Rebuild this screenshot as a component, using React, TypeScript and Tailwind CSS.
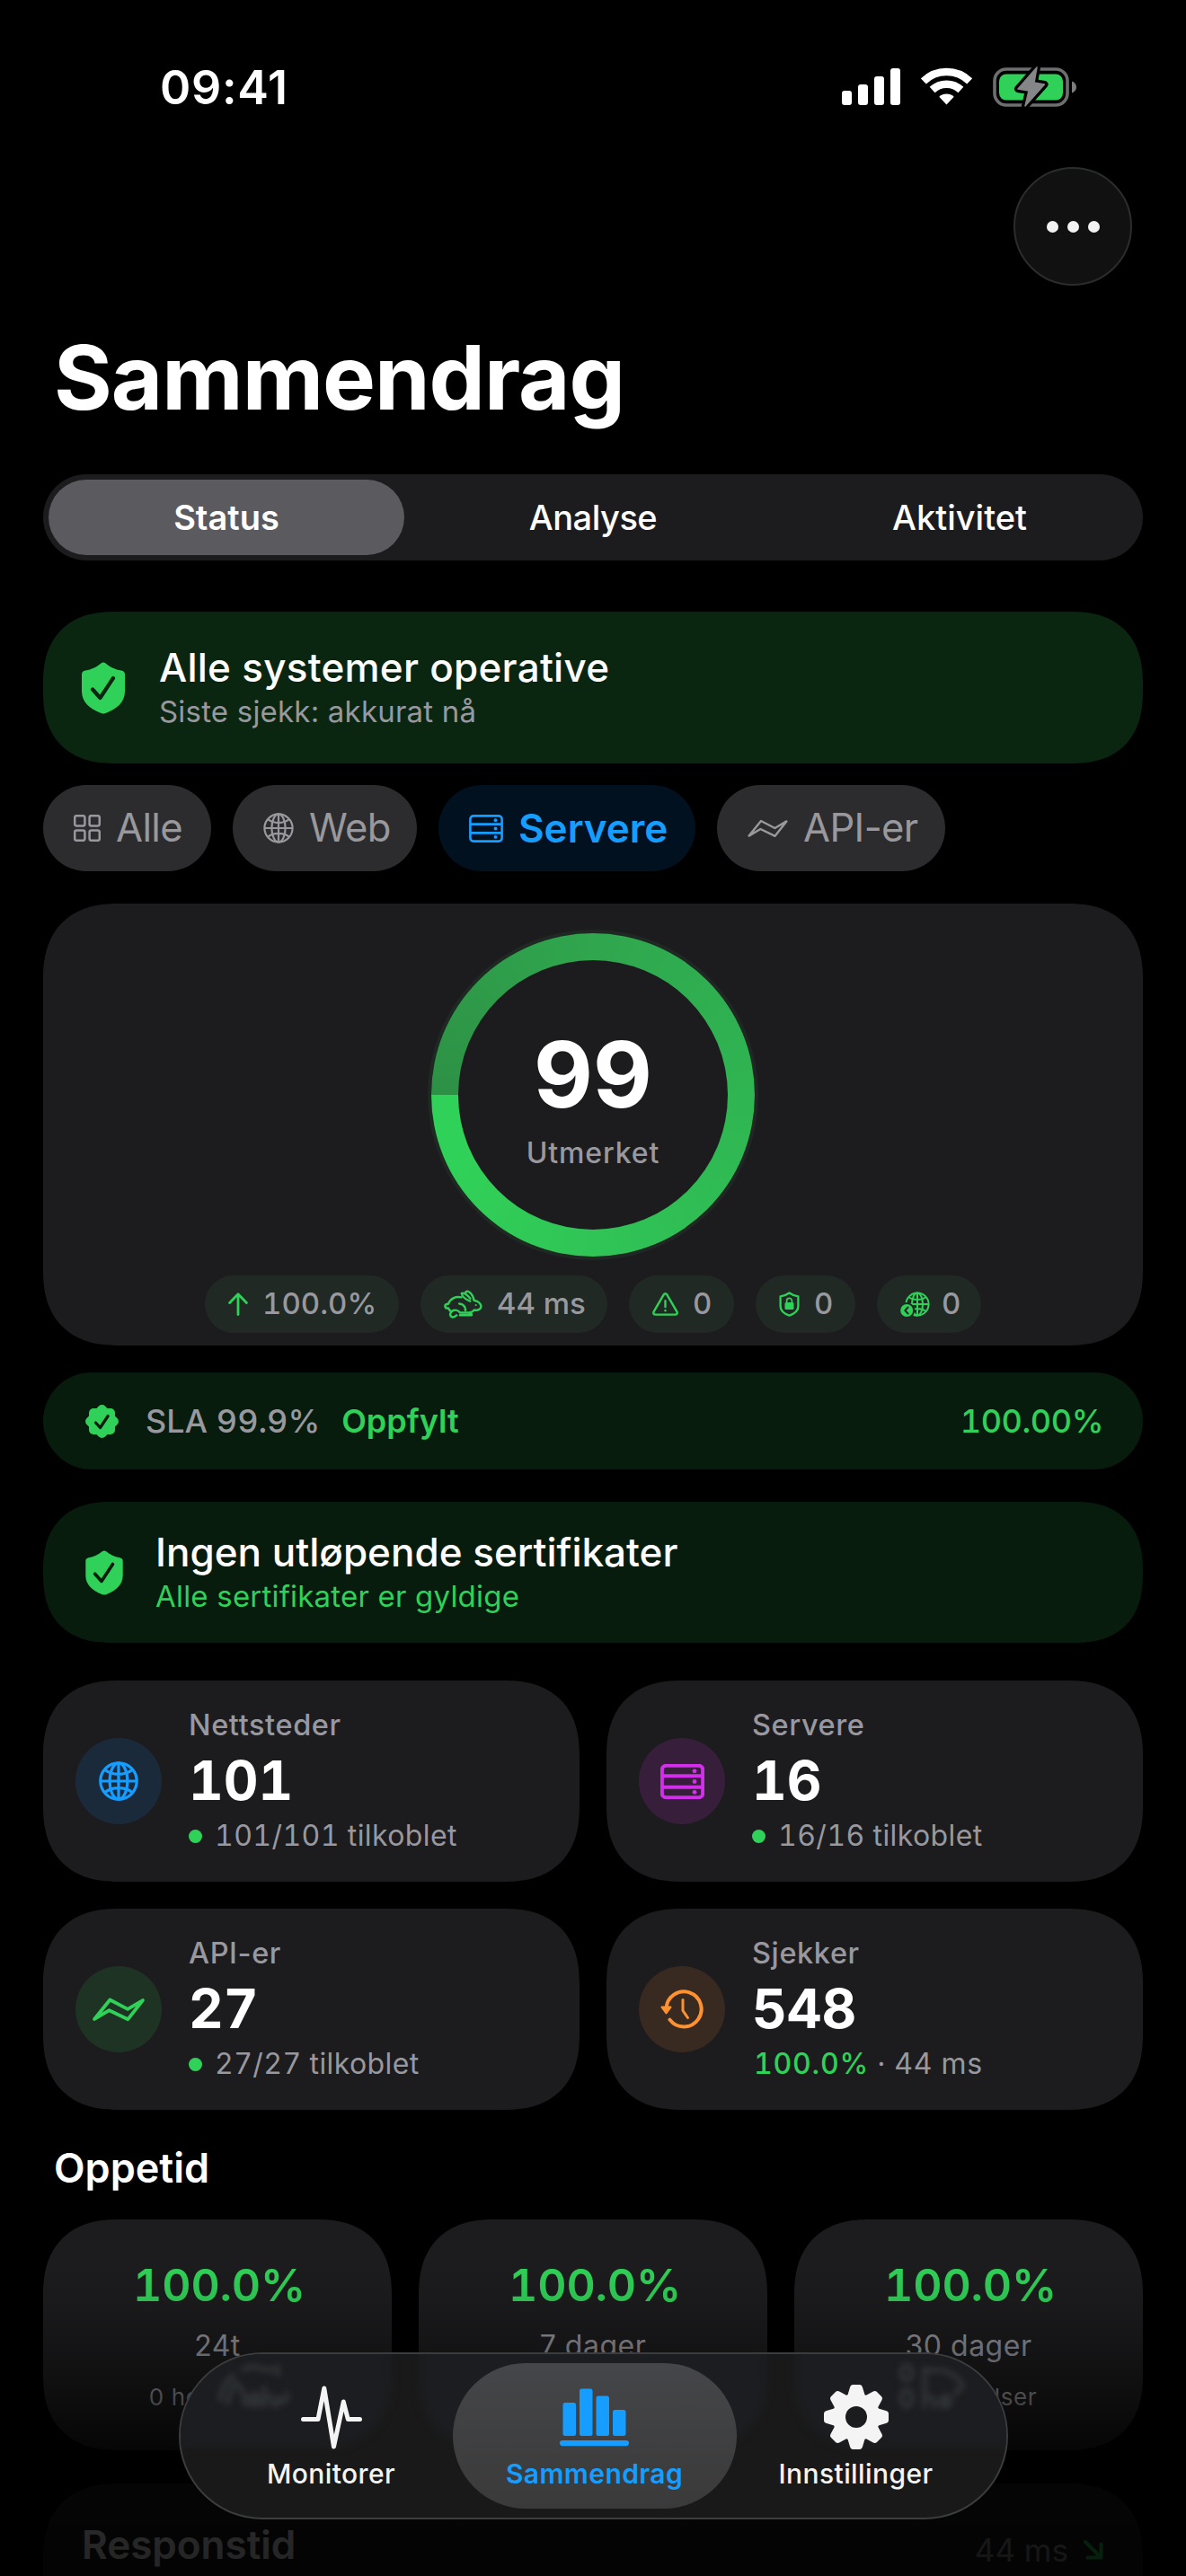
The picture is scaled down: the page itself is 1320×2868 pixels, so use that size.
import type { ReactNode } from "react";
import { cx } from "class-variance-authority";

type IconProps = { className?: string };

function SignalIcon() {
  return (
    <svg className="h-[43px] w-[65px]" viewBox="0 0 65 43" fill="#fff">
      <rect x="0" y="26" width="11" height="16" rx="3" />
      <rect x="18" y="19" width="11" height="23" rx="3" />
      <rect x="36" y="10" width="11" height="32" rx="3" />
      <rect x="54" y="1" width="11" height="41" rx="3" />
    </svg>
  );
}

function WifiIcon() {
  return (
    <svg className="h-[43px] w-[57px]" viewBox="0 0 57 43" fill="none" stroke="#fff">
      <path d="M2.8 15.4a37 37 0 0 1 51.4 0" strokeWidth="8.6" />
      <path d="M12.6 25a23.2 23.2 0 0 1 31.8 0" strokeWidth="8.6" />
      <path d="M20.3 32.8a12 12 0 0 1 16.4 0L28.5 41.6z" fill="#fff" stroke="none" />
    </svg>
  );
}

function BatteryIcon() {
  const bolt = "M49 1 28 25l12 2-4 17 21.5-24L46 18z";
  return (
    <svg className="h-[46px] w-[94px]" viewBox="0 0 94 46">
      <rect x="2" y="3" width="81" height="40" rx="13" fill="none" stroke="#6e6e71" strokeWidth="3.6" />
      <rect x="7" y="8.5" width="71" height="29" rx="8" fill="#30d158" />
      <path d="M88 16.5c3 .8 5 3.4 5 6.5s-2 5.7-5 6.500z" fill="#7d7d80" />
      <path d={bolt} fill="#000" stroke="#000" strokeWidth="8" strokeLinejoin="round" />
      <path d={bolt} fill="#858688" stroke="#858688" strokeWidth="1.5" strokeLinejoin="round" />
    </svg>
  );
}

function GridIcon({ className }: IconProps) {
  return (
    <svg className={className} viewBox="0 0 30 30" fill="none" stroke="currentColor" strokeWidth="2.5">
      <rect x="1.2" y="1.2" width="11.2" height="11.2" rx="2" />
      <rect x="17.6" y="1.2" width="11.2" height="11.2" rx="2" />
      <rect x="1.2" y="17.6" width="11.2" height="11.2" rx="2" />
      <rect x="17.6" y="17.6" width="11.2" height="11.2" rx="2" />
    </svg>
  );
}

function GlobeIcon({ className, stroke = 2.2 }: IconProps & { stroke?: number }) {
  return (
    <svg className={className} viewBox="0 0 34 34" fill="none" stroke="currentColor" strokeWidth={stroke}>
      <circle cx="17" cy="17" r="15.6" />
      <ellipse cx="17" cy="17" rx="7.6" ry="15.6" />
      <path d="M17 1.4v31.2M1.4 17h31.2M5 7.2c3.2 2.5 7.4 3.9 12 3.9s8.800-1.4 12-3.9M5 26.8c3.2-2.5 7.4-3.9 12-3.9s8.800 1.4 12 3.9" />
    </svg>
  );
}

function ServerIcon({ className, stroke = 2.6 }: IconProps & { stroke?: number }) {
  return (
    <svg className={className} viewBox="0 0 38 31" fill="none" stroke="currentColor" strokeWidth={stroke} preserveAspectRatio="none">
      <rect x="1.4" y="1.4" width="35.2" height="28.2" rx="3.6" />
      <path d="M1.4 10.6h35.2M1.4 20.4h35.2" />
      <g fill="currentColor" stroke="none">
        <circle cx="29.5" cy="6.2" r="1.9" />
        <circle cx="29.5" cy="15.5" r="1.9" />
        <circle cx="29.5" cy="24.9" r="1.9" />
      </g>
    </svg>
  );
}

function ApiIcon({ className, stroke = 2.4 }: IconProps & { stroke?: number }) {
  return (
    <svg className={className} viewBox="0 0 45 21" fill="none" stroke="currentColor" strokeWidth={stroke} strokeLinejoin="round">
      <path d="M1.6 18.6 15 2l15.400 8L43.400 2.400 30.600 18.800 14.400 11z" />
    </svg>
  );
}

function ShieldCheck({ className, mark }: IconProps & { mark: string }) {
  return (
    <svg className={className} viewBox="0 0 48 58">
      <path
        d="M24 .5c1 0 1.600.3 2.500 1C32 6 37 8.200 44 9.600c2.700.5 4 1.700 4 4.400v18.500c0 12-8.500 19.500-21.500 24.500-1.900.7-3.100.7-5 0C8.500 52 0 44.500 0 32.500V14c0-2.700 1.300-3.900 4-4.400C11 8.200 16 6 21.500 1.500c.9-.7 1.500-1 2.500-1z"
        fill="#30d158"
      />
      <path d="m12 30.500 8.500 9.500 14.500-22" fill="none" stroke={mark} strokeWidth="4.2" strokeLinecap="round" strokeLinejoin="round" />
    </svg>
  );
}

function SealCheck({ className }: IconProps) {
  return (
    <svg className={className} viewBox="0 0 41 41">
      <g fill="#30d158">
        <rect x="6" y="6" width="29" height="29" rx="5" />
        <rect x="6" y="6" width="29" height="29" rx="5" transform="rotate(45 20.5 20.5)" />
      </g>
      <path d="m13.500 22 5 5.500 8.700-13" fill="none" stroke="#071c0d" strokeWidth="3.2" strokeLinecap="round" strokeLinejoin="round" />
    </svg>
  );
}

function ArrowUpIcon() {
  return (
    <svg className="h-[26px] w-[22px]" viewBox="0 0 22 26" fill="none" stroke="currentColor" strokeWidth="2.8" strokeLinecap="round" strokeLinejoin="round">
      <path d="M11 24.5V1.800M1.600 11.500 11 1.800l9.400 9.700" />
    </svg>
  );
}

function HareIcon() {
  return (
    <svg className="h-[32px] w-[43px]" viewBox="0 0 44 32" fill="none" stroke="currentColor" strokeWidth="2.5" strokeLinecap="round" strokeLinejoin="round">
      <path d="M30 12.500C25.500 11 20.800 7.500 20.200 3.800 22.500 2 27.500 6 30 9.500" />
      <path d="M24.500 3.200C25 .8 27.500.8 29.500 2.600c2.600 2.300 4.300 5.400 4.700 9 4.600.8 8 3.700 8.200 7 .1 3-3.200 4.400-8 4.400" />
      <path d="M20 8.200c-6-1.600-12.500 1.300-15 7.500-2.500-.2-3.900 1.300-3.500 3 .4 1.600 2 2.200 3.700 1.900.7 1.500 1.500 2.700 2.600 3.600M17.500 15.500c4.500.3 7.500 3.500 7 7.500" />
      <path d="M9.300 23.700c3-1.500 7-.8 9.200 2h9.500c2.600 0 3.800.9 3.700 2.900H18.300M9.500 24c-2.300 1.700-3 4.300-1.400 5.800 1.700 1.500 4.400.7 6.400-1.200M34.400 22.900c-1.300 1.300-3 2.300-5 2.800" />
      <circle cx="36.5" cy="17" r="1.1" fill="currentColor" stroke="none" />
    </svg>
  );
}

function WarningIcon() {
  return (
    <svg className="h-[26px] w-[29px]" viewBox="0 0 29 26" fill="none" stroke="currentColor" strokeWidth="2.4" strokeLinecap="round" strokeLinejoin="round">
      <path d="M12.700 2.300 1.600 21.400c-.8 1.500 0 3.200 1.900 3.200h22c1.900 0 2.700-1.700 1.900-3.200L16.300 2.300c-.9-1.400-2.700-1.400-3.600 0z" />
      <path d="M14.500 9.300v6.700M14.500 20v.3" />
    </svg>
  );
}

function ShieldLockIcon() {
  return (
    <svg className="h-[28px] w-[23px]" viewBox="0 0 23 28" fill="none" stroke="currentColor" strokeWidth="2.3" strokeLinejoin="round">
      <path d="M11.500 1.500c3 2.200 5.700 3.100 9.900 3.900v11c0 5-3.900 7.900-9.900 10.200-6-2.300-9.900-5.200-9.900-10.200v-11c4.200-.8 6.900-1.700 9.900-3.900z" />
      <rect x="6.5" y="12" width="10" height="8" rx="1.5" fill="currentColor" stroke="none" />
      <path d="M8.600 12.500v-2.300c0-3.800 5.800-3.800 5.800 0v2.300" strokeWidth="1.7" />
    </svg>
  );
}

function GlobeBadgeIcon() {
  return (
    <svg className="h-[29px] w-[33px]" viewBox="0 0 33 29" fill="none" stroke="currentColor" strokeWidth="2">
      <circle cx="19" cy="14" r="12.6" />
      <ellipse cx="19" cy="14" rx="6" ry="12.6" />
      <path d="M19 1.400v25.200M6.400 14h25.200M9.500 6.200c5 3.600 14 3.600 19 0M9.500 21.800c5-3.600 14-3.600 19 0" />
      <circle cx="7.2" cy="21" r="9" fill="#202924" stroke="none" />
      <circle cx="7.2" cy="21" r="7" fill="currentColor" stroke="none" />
      <path d="m8.600 17.500-3.300 3.500 3.300 3.500" stroke="#202924" strokeLinecap="round" strokeLinejoin="round" />
    </svg>
  );
}

function HistoryIcon() {
  return (
    <svg className="h-[44px] w-[48px]" viewBox="0 0 48 44" fill="none" stroke="currentColor" strokeLinecap="round" strokeLinejoin="round">
      <path d="M6.600 21.500A19.500 19.500 0 1 1 10.500 33.600" strokeWidth="4" />
      <path d="M1.500 19.600h10L6.500 26.400z" fill="currentColor" strokeWidth="2" />
      <path d="M25 11.500v12l5.500 8" strokeWidth="3" />
    </svg>
  );
}

function PulseIcon() {
  return (
    <svg className="h-[72px] w-[68px]" viewBox="0 0 68 72" fill="none" stroke="currentColor" strokeWidth="5" strokeLinecap="round" strokeLinejoin="round">
      <path d="M2.500 38.500H19L25.800 4l10.700 65 10.800-50 5 19.500h13.200" />
    </svg>
  );
}

function ChartIcon() {
  return (
    <svg className="h-[72px] w-[77px]" viewBox="0 0 77 72" fill="currentColor">
      <rect x="3.5" y="20" width="14.5" height="37" rx="2.5" />
      <rect x="22" y="4.5" width="14.5" height="52.5" rx="2.5" />
      <rect x="40.5" y="12.5" width="14.5" height="44.5" rx="2.5" />
      <rect x="59" y="28" width="14.5" height="29" rx="2.5" />
      <rect x="0" y="62" width="77" height="6.2" rx="3.1" />
    </svg>
  );
}

function GearIcon() {
  return (
    <svg className="h-[72px] w-[72px]" viewBox="-36 -36 72 72" fill="currentColor">
      {[0, 45, 90, 135, 180, 225, 270, 315].map((a) => (
        <path key={a} d="M-10-23-7-33c.6-2 1.600-3 3.500-3h7c1.900 0 2.900 1 3.500 3l3 10z" transform={`rotate(${a})`} />
      ))}
      <circle r="26.5" />
      <circle r="12" fill="#1b1c1e" />
    </svg>
  );
}

const filters = [
  { label: "Alle", icon: <GridIcon className="h-[30px] w-[30px]" />, width: "w-[187px]" },
  { label: "Web", icon: <GlobeIcon className="h-[34px] w-[34px]" />, width: "w-[205px]" },
  { label: "Servere", icon: <ServerIcon className="h-[31px] w-[38px]" />, width: "w-[286px]", active: true },
  { label: "API-er", icon: <ApiIcon className="h-[21px] w-[45px]" />, width: "w-[254px]" },
];

const chips = [
  { label: "100.0%", icon: <ArrowUpIcon />, width: "w-[216px]" },
  { label: "44 ms", icon: <HareIcon />, width: "w-[208px]" },
  { label: "0", icon: <WarningIcon />, width: "w-[117px]" },
  { label: "0", icon: <ShieldLockIcon />, width: "w-[111px]" },
  { label: "0", icon: <GlobeBadgeIcon />, width: "w-[116px]", gap: "gap-[13px]" },
];

const periods = ["24t", "7 dager", "30 dager"];

function Banner({
  icon,
  title,
  subtitle,
  className,
  subtitleClass,
}: {
  icon: ReactNode;
  title: string;
  subtitle: string;
  className: string;
  subtitleClass: string;
}) {
  return (
    <section className={cx("flex items-center [corner-shape:superellipse(1.25)]", className)}>
      {icon}
      <div>
        <h2 className="text-[44px] leading-[54px] font-medium whitespace-nowrap text-white">{title}</h2>
        <p className={cx("text-[33px] leading-[45px] tracking-[0.2px] whitespace-nowrap", subtitleClass)}>{subtitle}</p>
      </div>
    </section>
  );
}

function StatCard({
  icon,
  tint,
  label,
  value,
  children,
}: {
  icon: ReactNode;
  tint: string;
  label: string;
  value: string;
  children: ReactNode;
}) {
  return (
    <div className="flex h-[224px] items-center rounded-[84px] bg-[#1c1c1e] pl-[36px] [corner-shape:superellipse(1.25)]">
      <div className={cx("flex h-[96px] w-[96px] items-center justify-center rounded-full", tint)}>{icon}</div>
      <div className="-mt-[1px] ml-[30px] whitespace-nowrap">
        <div className="text-[32.5px] leading-[42px] font-medium tracking-[0.6px] text-[#98989e]">{label}</div>
        <div className="text-[60px] leading-[81px] font-bold text-white tabular-nums">{value}</div>
        <div className="flex items-center text-[32px] leading-[42px] text-[#98989e] tabular-nums">{children}</div>
      </div>
    </div>
  );
}

function Connected({ children }: { children: ReactNode }) {
  return (
    <>
      <span className="mr-[14px] h-[15px] w-[15px] rounded-full bg-[#30d158]" />
      <span className="tracking-[0.4px]">{children}</span>
    </>
  );
}

function TabItem({ icon, label, active }: { icon: ReactNode; label: string; active?: boolean }) {
  return (
    <div
      className={cx(
        "flex h-[162px] w-[316px] flex-col items-center rounded-full pt-[24px]",
        active
          ? "bg-linear-to-b from-[#454649] to-[#3a3a3a] font-semibold text-[#159eff]"
          : "font-medium text-[#f4f4f4]"
      )}
    >
      {icon}
      <span className="mt-[7px] text-[30px] leading-[40px] tracking-[0.4px]">{label}</span>
    </div>
  );
}

export default function App() {
  return (
    <div className="relative flex h-[2868px] w-[1320px] flex-col overflow-hidden bg-black font-['Inter',sans-serif] text-white">
      {/* status bar */}
      <div className="mt-[68px] flex h-[60px] shrink-0 items-center justify-between pr-[121px] pl-[178px]">
        <span className="text-[52px] leading-[60px] font-semibold tracking-[0.7px]">09:41</span>
        <div className="mb-[3px] flex items-center gap-[23px]">
          <SignalIcon />
          <WifiIcon />
          <BatteryIcon />
        </div>
      </div>

      <div className="mt-[58px] flex shrink-0 justify-end pr-[60px]">
        <button className="flex h-[132px] w-[132px] items-center justify-center gap-[10px] rounded-full border-2 border-[#2b2c2c] bg-[#111112]">
          <span className="h-[13px] w-[13px] rounded-full bg-[#f2f2f2]" />
          <span className="h-[13px] w-[13px] rounded-full bg-[#f2f2f2]" />
          <span className="h-[13px] w-[13px] rounded-full bg-[#f2f2f2]" />
        </button>
      </div>

      <main className="mx-[48px] shrink-0">
        <h1 className="mt-[42px] ml-[12px] text-[99px] leading-[120px] font-bold tracking-[-1px]">Sammendrag</h1>

        <div className="mt-[48px] grid h-[96px] grid-cols-3 rounded-full bg-[#1c1c1e] text-[38px]">
          <div className="m-[6px] flex items-center justify-center rounded-full bg-[#5b5a5f] font-semibold">Status</div>
          <div className="m-[6px] flex items-center justify-center font-medium tracking-[-0.5px]">Analyse</div>
          <div className="m-[6px] flex items-center justify-center font-medium">Aktivitet</div>
        </div>

        <Banner
          className="mt-[57px] h-[169px] gap-[38px] rounded-[80px] bg-[#0a2611] pl-[43px] tracking-[0.25px]"
          icon={<ShieldCheck className="h-[58px] w-[48px]" mark="#0a2611" />}
          title="Alle systemer operative"
          subtitle="Siste sjekk: akkurat nå"
          subtitleClass="text-[#98989e]"
        />

        <div className="mt-[24px] flex gap-[24px]">
          {filters.map((f) => (
            <div
              key={f.label}
              className={cx(
                "flex h-[96px] items-center gap-[17px] rounded-full pl-[34px]",
                f.width,
                f.active
                  ? "bg-[#02111f] text-[44px] font-semibold text-[#159eff]"
                  : "bg-[#2c2c2e] text-[43.5px] tracking-[-0.6px] text-[#98989d]"
              )}
            >
              {f.icon}
              <span>{f.label}</span>
            </div>
          ))}
        </div>

        <section className="mt-[36px] flex h-[492px] flex-col items-center rounded-[84px] bg-[#1c1c1e] pt-[33px] [corner-shape:superellipse(1.25)]">
          <div className="flex h-[360px] w-[360px] items-center justify-center rounded-full bg-[conic-gradient(from_270deg,#2d9145,#30a64e_25%,#2fb552_50%,#30c456_75%,#30d158_92%)] ring-4 ring-[#1f2823]">
            <div className="flex h-[300px] w-[300px] flex-col items-center justify-center rounded-full bg-[#1c1c1e] pt-[3px]">
              <span className="text-[102px] leading-[120px] font-bold tabular-nums">99</span>
              <span className="mt-[6px] text-[32px] leading-[44px] font-medium tracking-[0.9px] text-[#98989e]">Utmerket</span>
            </div>
          </div>
          <div className="mt-[21px] flex gap-[24px]">
            {chips.map((c, i) => (
              <div
                key={i}
                className={cx(
                  "flex h-[64px] items-center rounded-full bg-[#202924] pl-[26px] text-[33px] font-medium text-[#98989e] tabular-nums",
                  c.width,
                  c.gap ?? "gap-[16px]"
                )}
              >
                <span className="text-[#30d158]">{c.icon}</span>
                <span>{c.label}</span>
              </div>
            ))}
          </div>
        </section>

        <section className="mt-[30px] flex h-[108px] items-center rounded-full bg-[#071c0d] pr-[44px] pl-[45px] text-[36px] tabular-nums">
          <SealCheck className="h-[41px] w-[41px]" />
          <span className="ml-[28px] font-medium text-[#98989e]">SLA 99.9%</span>
          <span className="ml-[24px] font-semibold text-[#30d158]">Oppfylt</span>
          <span className="ml-auto font-medium tracking-[-0.4px] text-[#30d158]">100.00%</span>
        </section>

        <Banner
          className="mt-[36px] h-[157px] gap-[36px] rounded-[76px] bg-[#071c0d] pl-[47px]"
          icon={<ShieldCheck className="h-[50px] w-[42px]" mark="#071c0d" />}
          title="Ingen utløpende sertifikater"
          subtitle="Alle sertifikater er gyldige"
          subtitleClass="text-[#30d158]"
        />

        <div className="mt-[42px] grid grid-cols-2 gap-[30px]">
          <StatCard
            icon={<GlobeIcon className="h-[44px] w-[44px] text-[#159eff]" stroke={2.5} />}
            tint="bg-[#1b2a3b]"
            label="Nettsteder"
            value="101"
          >
            <Connected>101/101 tilkoblet</Connected>
          </StatCard>
          <StatCard
            icon={<ServerIcon className="h-[39px] w-[49px] text-[#d12fea]" stroke={3.2} />}
            tint="bg-[#371f3b]"
            label="Servere"
            value="16"
          >
            <Connected>16/16 tilkoblet</Connected>
          </StatCard>
          <StatCard
            icon={<ApiIcon className="h-[27px] w-[58px] text-[#30d158]" stroke={3} />}
            tint="bg-[#1f3325]"
            label="API-er"
            value="27"
          >
            <Connected>27/27 tilkoblet</Connected>
          </StatCard>
          <StatCard
            icon={<span className="text-[#ff9230]"><HistoryIcon /></span>}
            tint="bg-[#382a20]"
            label="Sjekker"
            value="548"
          >
            <span className="ml-[2px] font-medium tracking-[0.8px] text-[#30d158]">100.0%</span>
            <span className="ml-[9px] tracking-[0.7px]">· 44 ms</span>
          </StatCard>
        </div>

        <h2 className="mt-[35px] ml-[12px] text-[45px] leading-[60px] font-semibold">Oppetid</h2>

        <div className="mt-[27px] grid grid-cols-3 gap-[30px]">
          {periods.map((p) => (
            <div
              key={p}
              className="flex h-[257px] flex-col items-center rounded-[84px] bg-[#1c1c1e] pt-[41px] [corner-shape:superellipse(1.25)]"
            >
              <span className="pl-[4px] text-[50px] leading-[64px] font-semibold tracking-[-0.2px] text-[#30d158] tabular-nums">100.0%</span>
              <span className="mt-[14px] text-[32px] leading-[44px] tracking-[0.5px] text-[#98989e]">{p}</span>
              <span className="mt-[17px] text-[26px] leading-[36px] tracking-[0.6px] text-[#98989e]">0 hendelser</span>
            </div>
          ))}
        </div>

        <section className="mt-[37px] flex h-[240px] justify-between rounded-[84px] bg-[#1c1c1e] pt-[38px] pr-[44px] pl-[43px] [corner-shape:superellipse(1.25)]">
          <h2 className="text-[44px] leading-[60px] font-semibold">Responstid</h2>
          <div className="mt-[6px] flex h-[60px] items-center gap-[17px] text-[35px] text-[#98989e]">
            44 ms
            <svg className="h-[22px] w-[22px]" viewBox="0 0 22 22" fill="none" stroke="#30d158" strokeWidth="4" strokeLinecap="round" strokeLinejoin="round">
              <path d="m2 2 17.500 17.500M19.500 4.500v15h-15" />
            </svg>
          </div>
        </section>
      </main>

      {/* scroll edge fade */}
      <div className="pointer-events-none absolute inset-x-0 bottom-0 h-[348px] bg-[linear-gradient(to_bottom,rgba(0,0,0,0)_0%,rgba(0,0,0,0.1)_14%,rgba(0,0,0,0.27)_26%,rgba(0,0,0,0.52)_43%,rgba(0,0,0,0.8)_60%,rgba(0,0,0,0.85)_90%,rgba(0,0,0,0.86)_100%)]" />

      {/* floating tab bar */}
      <nav className="absolute top-[2619px] left-[199px] h-[186px] w-[923px] overflow-hidden rounded-full border-2 border-[#3b3c3d] bg-[#191919]">
        {/* cards and captions showing through the glass */}
        <div className="absolute -top-[20px] -left-[153px] h-[124px] w-[388px] rounded-b-[70px] bg-[#1c1d20] blur-[4px]" />
        <div className="absolute -top-[20px] left-[265px] h-[124px] w-[388px] rounded-b-[70px] bg-[#1c1d20] blur-[4px]" />
        <div className="absolute -top-[20px] left-[683px] h-[124px] w-[388px] rounded-b-[70px] bg-[#1c1d20] blur-[4px]" />
        <svg className="absolute top-[8px] left-[34px] h-[56px] w-[90px] blur-[3px]" viewBox="0 0 90 56" fill="none" stroke="#2e3133" strokeWidth="6" strokeLinecap="round">
          <path d="M10 42c2-12 6-20 14-26M18 46c3-10 6-17 9-22M27 24c6 4 10 12 11 24M36 9c8-5 14-4 20-1M60 9h8M74 6v8M44 38c6-4 10 0 8 5h-9c0 6 6 7 10 4M59 30v19M66 38c-4 4 6 6 3 11M75 44h8M75 40v8M84 36v4" />
        </svg>
        <svg className="absolute top-[8px] left-[794px] h-[56px] w-[90px] blur-[3px]" viewBox="0 0 90 56" fill="none" stroke="#2e3133" strokeWidth="6" strokeLinecap="round">
          <ellipse cx="14" cy="13" rx="6" ry="8" />
          <ellipse cx="14" cy="41" rx="6" ry="9" />
          <path d="M34 8v20M34 10h14M54 10c10 3 18 9 22 16M34 32v18M34 42c6-5 11-2 11 8M53 44h9c0-7-10-7-10 0s6 8 10 4M68 36l8-8" />
        </svg>
        <div className="relative flex h-full items-center justify-center">
          <div className="-mr-[23px]">
            <TabItem icon={<PulseIcon />} label="Monitorer" />
          </div>
          <TabItem icon={<ChartIcon />} label="Sammendrag" active />
          <div className="-ml-[25px]">
            <TabItem icon={<GearIcon />} label="Innstillinger" />
          </div>
        </div>
      </nav>
    </div>
  );
}
